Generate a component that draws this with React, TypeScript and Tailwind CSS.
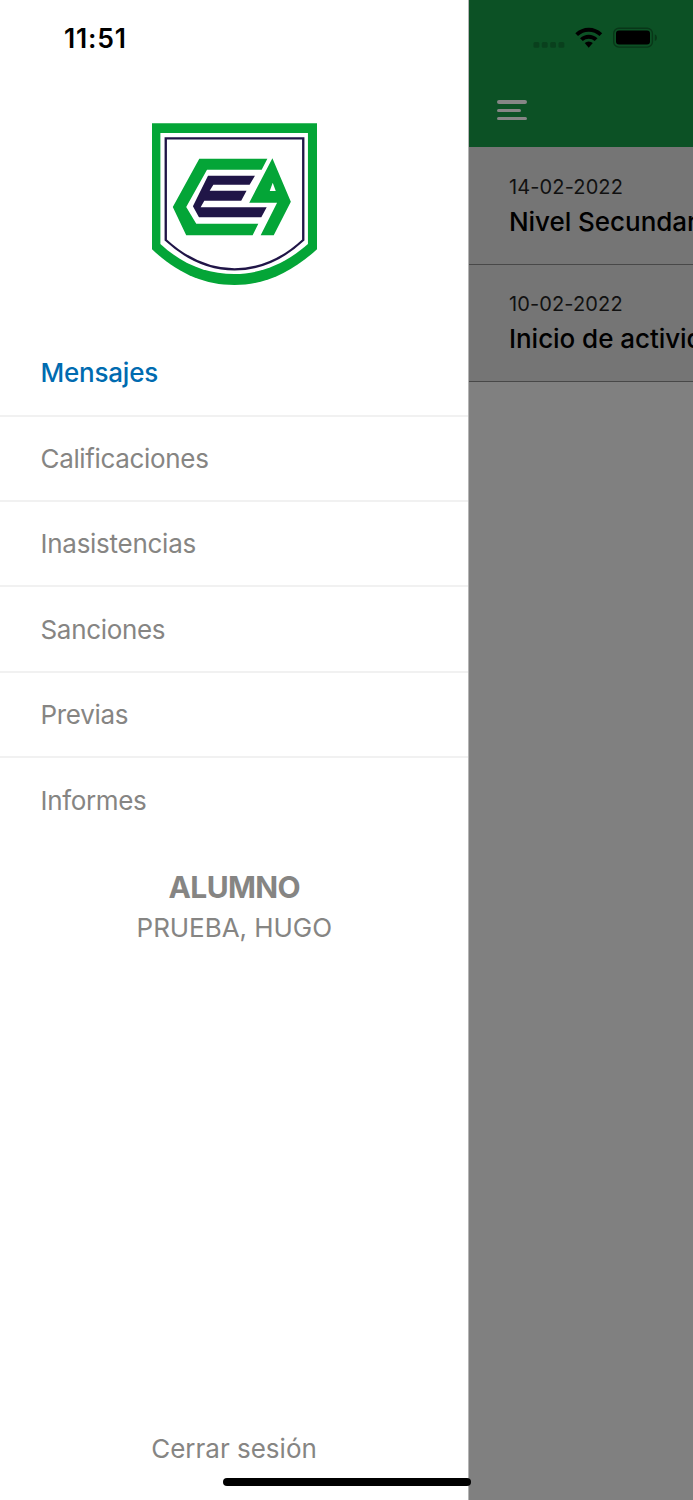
type MenuItem = {
  label: string;
  className: string;
};

type Message = {
  date: string;
  title: string;
};

const menuItems: MenuItem[] = [
  { label: 'Mensajes', className: 'font-medium tracking-[-0.22px] text-[#006bb0]' },
  { label: 'Calificaciones', className: 'tracking-[-0.34px] text-[#868583]' },
  { label: 'Inasistencias', className: 'tracking-[-0.27px] text-[#868583]' },
  { label: 'Sanciones', className: 'tracking-[-0.32px] text-[#868583]' },
  { label: 'Previas', className: 'tracking-[-0.3px] text-[#868583]' },
  { label: 'Informes', className: 'tracking-[-0.34px] text-[#868583]' },
];

const messages: Message[] = [
  { date: '14-02-2022', title: 'Nivel Secundario' },
  { date: '10-02-2022', title: 'Inicio de actividades' },
];

const Logo = () => (
  <svg width="165" height="162" viewBox="36 40 492 486" preserveAspectRatio="none" aria-label="logo escuela">
    <path fill="#04a537" d="M36 41H528V419C450 490 370 526 282 526C190 526 112 490 36 419Z" />
    <path fill="#fff" d="M61 70H501V403C435 462 360 493 282 493C200 493 128 465 61 403Z" />
    <path
      fill="none"
      stroke="#201547"
      strokeWidth="7"
      d="M77 86H487V391C425 449 355 479 282 479C208 479 140 449 77 391Z"
    />
    <path fill="#04a537" d="M177 147H380L363 180H200L138 292L168 342H353L336 377H138L98 292Z" />
    <path fill="#201547" d="M203 198H343L327 225H219L208 243H318L302 273H192L181 293H378L362 323H176L158 290Z" />
    <path
      fill="#04a537"
      fillRule="evenodd"
      d="M395 146L450 276L399 377H360L409 279H326ZM396 219L387 244H405Z"
    />
  </svg>
);

const StatusIcons = () => (
  <svg width="126" height="24" viewBox="0 0 126 24" aria-hidden="true">
    <g fill="#09401d">
      <rect x="1.5" y="15" width="5.8" height="5.8" rx="1.5" />
      <rect x="9.8" y="15" width="5.8" height="5.8" rx="1.5" />
      <rect x="18.2" y="15" width="5.8" height="5.8" rx="1.5" />
      <rect x="26.5" y="15" width="5.8" height="5.8" rx="1.5" />
    </g>
    <path d="M43.3 6.3Q49.2 0.8 56.7 0.8Q64.3 0.8 70.2 6.3L67.5 9.1Q62.9 4.8 56.7 4.8Q50.6 4.8 46 9.1Z" />
    <path d="M48 11.2Q51.8 7.7 56.7 7.7Q61.7 7.7 65.5 11.2L62.7 14.1Q60.1 11.8 56.7 11.8Q53.4 11.8 50.8 14.1Z" />
    <path d="M52.7 16Q54.4 14.4 56.7 14.4Q59.1 14.4 60.8 16L56.7 20.8Z" />
    <rect x="81.7" y="1.2" width="38.7" height="18.9" rx="5.2" fill="none" stroke="#083718" strokeWidth="1.4" />
    <rect x="84" y="3.6" width="34" height="14" rx="3" />
    <path fill="#083718" d="M122.8 7.3Q125 8.2 125 10.7Q125 13.2 122.8 14.1Z" />
  </svg>
);

const Drawer = () => (
  <aside className="flex h-full w-[468px] flex-none flex-col bg-white">
    <div className="flex h-[123.3px] items-start pl-[64px] pt-[22px] text-[26.5px] font-semibold leading-8 text-black">
      <span className="tracking-[0.8px]">11:51</span>
    </div>
    <div className="flex h-[208px] justify-center">
      <Logo />
    </div>

    <nav className="flex flex-col text-[26px]">
      {menuItems.map((item) => (
        <a
          key={item.label}
          className="flex h-[85.36px] items-center border-b-2 border-[#f1f1f1] pl-[40.5px] last:h-[84px] last:border-b-0"
        >
          <span className={item.className}>{item.label}</span>
        </a>
      ))}
    </nav>

    <div className="mt-[25px] pl-[0.6px] text-center text-[#868583]">
      <p className="text-[30px] font-bold leading-[40px] tracking-[-0.6px]">ALUMNO</p>
      <p className="text-[26px] leading-[41px] tracking-[-0.05px]">PRUEBA, HUGO</p>
    </div>

    <button type="button" className="mb-[31px] mt-auto text-[26px] leading-[40px] text-[#868583]">
      Cerrar sesión
    </button>
  </aside>
);

const Inbox = () => (
  <main className="min-w-0 flex-1 overflow-hidden border-l border-[#b5b5b5] bg-[#808080]">
    <header className="flex h-[147.4px] flex-col bg-[#0c5125]">
      <div className="flex pl-[63.3px] pt-[27px]">
        <StatusIcons />
      </div>
      <div className="flex flex-col gap-[5.2px] pl-[28.2px] pt-[49.4px]">
        <span className="h-[3.2px] w-[30px] rounded-full bg-[#868686]" />
        <span className="h-[3.2px] w-[24px] rounded-full bg-[#868686]" />
        <span className="h-[3.2px] w-[30px] rounded-full bg-[#868686]" />
      </div>
    </header>

    {messages.map((message) => (
      <article
        key={message.date}
        className="h-[117.4px] whitespace-nowrap border-b border-[#484848] bg-[#757575] pl-[40px] pt-[24.7px]"
      >
        <p className="text-[20px] leading-[30px] tracking-[0.12px] text-[#111]">{message.date}</p>
        <p className="text-[26px] font-medium leading-[39px] tracking-[-0.05px] text-black">{message.title}</p>
      </article>
    ))}
  </main>
);

export default function App() {
  return (
    <div className="relative flex h-[1500px] w-[693px] overflow-hidden font-['Inter','Liberation_Sans',sans-serif]">
      <Drawer />
      <Inbox />
      {/* home indicator */}
      <div className="absolute bottom-[14px] left-[222.5px] h-[8px] w-[248px] rounded-full bg-black" />
    </div>
  );
}
